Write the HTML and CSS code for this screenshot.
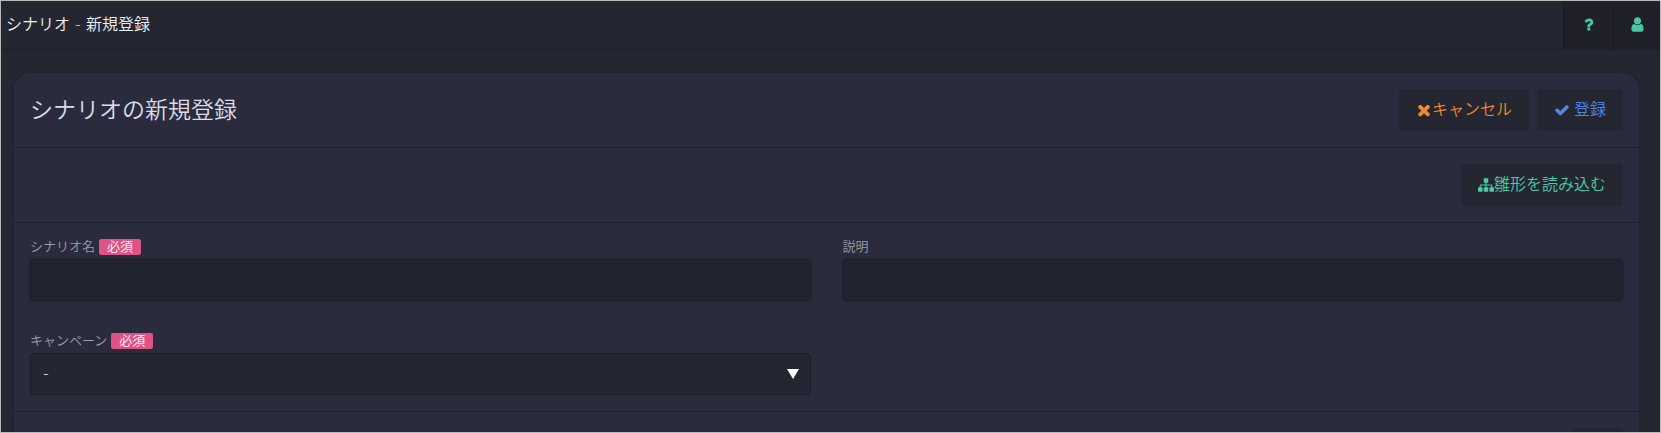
FILE: index.html
```html
<!DOCTYPE html>
<html lang="ja">
    <head>
        <meta charset="utf-8">
        <title>シナリオ - 新規登録</title>
        <link rel="stylesheet" href="styles.css">
    </head>
    <body>
        <header class="topbar">
            <h1 class="topbar__title">シナリオ - 新規登録</h1>
            <nav class="topbar__menu">
                <button class="topbar__button" type="button" aria-label="ヘルプ">
                    <svg class="icon icon--large" viewBox="0 0 1792 1792"><path d="M1088 1256v240q0 16-12 28t-28 12h-240q-16 0-28-12t-12-28v-240q0-16 12-28t28-12h240q16 0 28 12t12 28zm316-600q0 54-15.500 101t-35 76.500-55 59.500-57.500 43.500-61 35.500q-41 23-68.500 65t-27.500 67q0 17-12 32.500t-28 15.500h-240q-15 0-25.500-18.500t-10.500-37.500v-45q0-83 65-156.500t143-108.500q59-27 84-56t25-76q0-42-46.500-74t-107.500-32q-65 0-108 29-35 25-107 115-13 16-31 16-12 0-25-8l-164-125q-13-10-15.500-25t5.500-28q160-266 464-266 80 0 161 31t146 83 106 127.500 41 158.500z"/></svg>
                </button>
                <button class="topbar__button" type="button" aria-label="ユーザー">
                    <svg class="icon icon--large" viewBox="0 0 1792 1792"><path d="M1536 1399q0 109-62.500 187t-150.500 78h-854q-88 0-150.500-78t-62.500-187q0-85 8.500-160.500t31.500-152 58.500-131 94-89 134.500-34.500q131 128 313 128t313-128q76 0 134.500 34.500t94 89 58.500 131 31.500 152 8.500 160.500zm-256-887q0 159-112.500 271.500t-271.500 112.500-271.500-112.500-112.500-271.500 112.500-271.500 271.500-112.500 271.500 112.500 112.500 271.500z"/></svg>
                </button>
            </nav>
        </header>
        <main class="panel">
            <div class="panel__row">
                <h2 class="panel__title">シナリオの新規登録</h2>
                <div class="actions">
                    <button class="button button--cancel" type="button">
                        <svg class="icon" viewBox="96 96 1600 1600"><path d="M1490 1322q0 40-28 68l-136 136q-28 28-68 28t-68-28l-294-294-294 294q-28 28-68 28t-68-28l-136-136q-28-28-28-68t28-68l294-294-294-294q-28-28-28-68t28-68l136-136q28-28 68-28t68 28l294 294 294-294q28-28 68-28t68 28l136 136q28 28 28 68t-28 68l-294 294 294 294q28 28 28 68z"/></svg>キャンセル
                    </button>
                    <button class="button button--submit" type="submit" form="scenario">
                        <svg class="icon" viewBox="0 0 1792 1792"><path d="M1671 566q0 40-28 68l-724 724-136 136q-28 28-68 28t-68-28l-136-136-362-362q-28-28-28-68t28-68l136-136q28-28 68-28t68 28l294 295 656-657q28-28 68-28t68 28l136 136q28 28 28 68z"/></svg>登録
                    </button>
                </div>
            </div>
            <div class="panel__row">
                <div class="actions">
                    <button class="button button--load" type="button">
                        <svg class="icon" viewBox="0 0 1792 1792"><path d="M1792 1248v320q0 40-28 68t-68 28h-320q-40 0-68-28t-28-68v-320q0-40 28-68t68-28h96v-192h-512v192h96q40 0 68 28t28 68v320q0 40-28 68t-68 28h-320q-40 0-68-28t-28-68v-320q0-40 28-68t68-28h96v-192h-512v192h96q40 0 68 28t28 68v320q0 40-28 68t-68 28h-320q-40 0-68-28t-28-68v-320q0-40 28-68t68-28h96v-192q0-52 38-90t90-38h512v-192h-96q-40 0-68-28t-28-68v-320q0-40 28-68t68-28h320q40 0 68 28t28 68v320q0 40-28 68t-68 28h-96v192h512q52 0 90 38t38 90v192h96q40 0 68 28t28 68z"/></svg>雛形を読み込む
                    </button>
                </div>
            </div>
            <form class="form" id="scenario">
                <div class="field">
                    <label class="field__label" for="name">シナリオ名 <span class="badge">必須</span></label>
                    <input class="field__input" id="name" type="text">
                </div>
                <div class="field">
                    <label class="field__label" for="description">説明</label>
                    <input class="field__input" id="description" type="text">
                </div>
                <div class="field">
                    <label class="field__label" for="campaign">キャンペーン <span class="badge">必須</span></label>
                    <div class="select">
                        <select class="select__box" id="campaign">
                            <option>-</option>
                        </select>
                    </div>
                </div>
            </form>
            <div class="panel__row">
                <div class="actions">
                    <button class="button button--load" type="button" aria-label="追加">
                        <svg class="icon" viewBox="0 0 16 16"><path d="M6 2h4v4h4v4h-4v4H6v-4H2V6h4z"/></svg>
                    </button>
                </div>
            </div>
        </main>
    </body>
</html>
```
FILE: styles.css
```css
* {
  box-sizing: border-box;
  margin: 0;
  padding: 0;
}

body {
  display: flex;
  flex-direction: column;
  height: 100vh;
  border: 1px solid #b8bab8;
  background-color: #242631;
  color: #dcdce4;
  font-family: "DejaVu Sans", "Noto Sans CJK JP", sans-serif;
  font-size: 16px;
  font-weight: 350;
  line-height: 24px;
}

button,
input,
select {
  font: inherit;
}

.icon {
  flex: none;
  width: 16px;
  height: 16px;
  fill: currentColor;
}

.icon--large {
  width: 17px;
  height: 17px;
}

.topbar {
  display: flex;
  flex: none;
  align-items: stretch;
  justify-content: space-between;
  height: 49px;
  border-bottom: 1px solid #1d1e28;
  background-color: #242732;
}

.topbar__title {
  align-self: center;
  padding-left: 5px;
  color: #f0f0f4;
  font-size: 16px;
  font-weight: 350;
}

.topbar__menu {
  display: flex;
}

.topbar__button {
  display: flex;
  align-items: center;
  justify-content: center;
  width: 50px;
  padding-bottom: 2px;
  border: none;
  border-left: 1px solid #191a23;
  background-color: #20202b;
  color: #4ac7a3;
  cursor: pointer;
}

.topbar__button:last-child {
  width: 47px;
}

.panel {
  flex: 1;
  min-height: 0;
  overflow: hidden;
  margin: 23px 21px 0 13px;
  border-radius: 16px 16px 0 0;
  background-color: #2a2c3d;
  box-shadow: 0 0 2px #1d1e28;
}

.panel__row {
  display: flex;
  align-items: center;
  padding: 16px;
  border-bottom: 1px solid #1f202b;
}

.panel__title {
  font-size: 23px;
  font-weight: 350;
}

.actions {
  display: flex;
  gap: 8px;
  margin-left: auto;
}

.button {
  display: flex;
  align-items: center;
  height: 42px;
  padding: 0 16px;
  border: 1px solid #242631;
  border-radius: 4px;
  background-color: #242631;
  cursor: pointer;
}

.button--cancel {
  color: #f08a2c;
}

.button--submit {
  gap: 4px;
  color: #4f87e6;
}

.button--load {
  color: #4ccaa6;
}

.form {
  display: grid;
  grid-template-columns: 1fr 1fr;
  gap: 32px;
  padding: 16px;
  border-bottom: 1px solid #1f202b;
}

.field__label {
  display: flex;
  align-items: center;
  gap: 4px;
  height: 16px;
  margin-bottom: 4px;
  color: #9c9da8;
  font-size: 13px;
  line-height: 16px;
}

.badge {
  padding: 0 8px;
  border-radius: 2px;
  background-color: #df5286;
  color: #fff;
}

.field__input,
.select__box {
  display: block;
  width: 100%;
  height: 42px;
  padding: 0 12px;
  border: 1px solid #1b1c25;
  border-radius: 4px;
  color: #fff;
}

.field__input {
  background-color: #21232e;
  box-shadow: 0 0 3px #1d1e28;
}

.select {
  position: relative;
}

.select__box {
  appearance: none;
  background-color: #242631;
}

.select::after {
  content: "";
  position: absolute;
  top: 16px;
  right: 12px;
  border: 6px solid transparent;
  border-top: 10px solid #fff;
  border-bottom: none;
  pointer-events: none;
}
```
